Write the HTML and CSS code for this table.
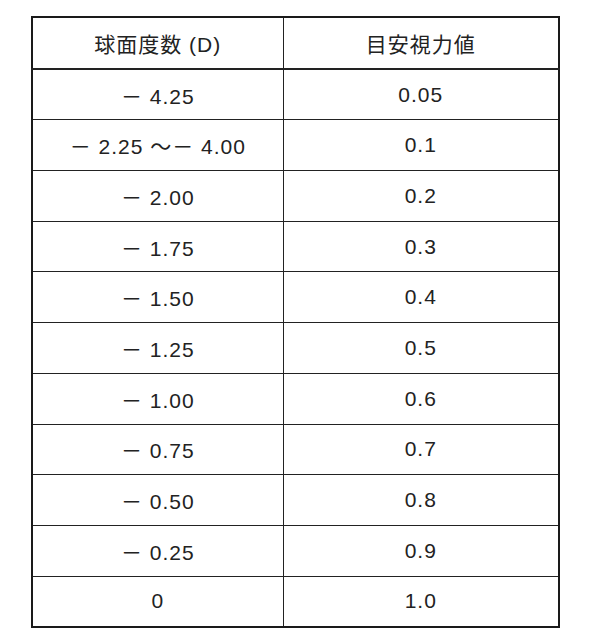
FILE: index.html
```html
<!DOCTYPE html>
<html lang="ja">
<head>
<meta charset="utf-8">
<link rel="stylesheet" href="styles.css">
</head>
<body>
<table class="chart">
  <colgroup><col class="c1"><col class="c2"></colgroup>
  <thead>
    <tr><th>球面度数 (D)</th><th>目安視力値</th></tr>
  </thead>
  <tbody>
    <tr><td>－ 4.25</td><td>0.05</td></tr>
    <tr><td>－ 2.25 ～－ 4.00</td><td>0.1</td></tr>
    <tr><td>－ 2.00</td><td>0.2</td></tr>
    <tr><td>－ 1.75</td><td>0.3</td></tr>
    <tr><td>－ 1.50</td><td>0.4</td></tr>
    <tr><td>－ 1.25</td><td>0.5</td></tr>
    <tr><td>－ 1.00</td><td>0.6</td></tr>
    <tr><td>－ 0.75</td><td>0.7</td></tr>
    <tr><td>－ 0.50</td><td>0.8</td></tr>
    <tr><td>－ 0.25</td><td>0.9</td></tr>
    <tr><td>0</td><td>1.0</td></tr>
  </tbody>
</table>
</body>
</html>
```
FILE: styles.css
```css
html, body {
  margin: 0;
  background: #ffffff;
}
body {
  padding: 16px 0 0 31px;
  font-family: "Liberation Sans", "Noto Sans CJK JP", sans-serif;
  color: #222222;
}
.chart {
  border-collapse: collapse;
  table-layout: fixed;
  width: 527px;
  border: 2.5px solid #1a1a1a;
}
.c1 { width: 251px; }
.c2 { width: 276px; }
.chart th,
.chart td {
  height: 49.7px;
  padding: 0;
  text-align: center;
  vertical-align: middle;
  font-size: 21px;
  letter-spacing: 1px;
  font-weight: normal;
  border: 1.5px solid #222222;
}
.chart th {
  border-bottom-width: 2.5px;
}
.chart td.wide {
  letter-spacing: 1.2px;
}
```
